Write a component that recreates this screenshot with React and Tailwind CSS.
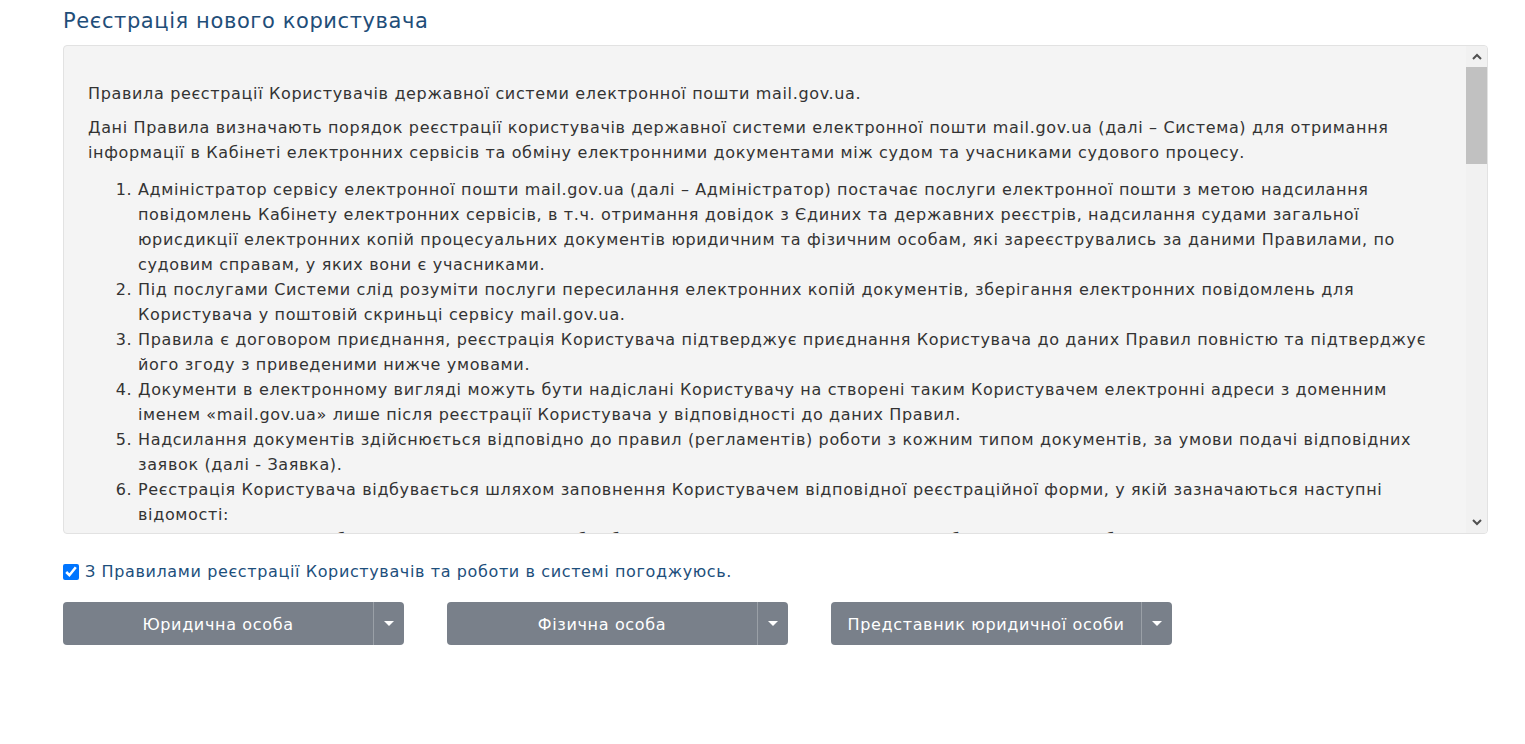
import React from "react";

function Caret() {
  return (
    <span className="block w-0 h-0 border-t-[5px] border-t-white border-x-[5px] border-x-transparent" />
  );
}

function SplitButton({ label }) {
  return (
    <div className="flex">
      <button className="w-[310px] h-[43px] pt-[2px] rounded-l-[4px] bg-[#79808a] text-white text-[16px] tracking-[0.65px] flex items-center justify-center">
        {label}
      </button>
      <button className="w-[31px] h-[43px] rounded-r-[4px] bg-[#79808a] border-l border-l-[#9aa0a7] flex items-center justify-center">
        <Caret />
      </button>
    </div>
  );
}

function Chevron({ up }) {
  return (
    <svg width="10" height="7" viewBox="0 0 10 7">
      <path
        d={up ? "M1 6 L5 2 L9 6" : "M1 1 L5 5 L9 1"}
        fill="none"
        stroke="#505050"
        strokeWidth="2"
      />
    </svg>
  );
}

export default function App() {
  return (
    <div className="min-h-[744px] bg-white font-['DejaVu_Sans',sans-serif] pl-[63px]">
      <h1 className="pt-[6px] text-[21px] leading-[30px] tracking-[0.6px] text-[#1f4e79] font-normal">
        Реєстрація нового користувача
      </h1>
      <div className="mt-[9px] w-[1425px] h-[489px] border border-[#e2e2e2] rounded-[4px] bg-[#f4f4f4] flex overflow-hidden">
        <div className="flex-1 overflow-hidden pl-[24px] pr-[24px] pt-[35px] text-[16px] leading-[25px] tracking-[0.65px] text-[#333]">
          <p className="mb-[9px]">
            Правила реєстрації Користувачів державної системи електронної пошти mail.gov.ua.
          </p>
          <p className="mb-[12px]">
            Дані Правила визначають порядок реєстрації користувачів державної системи електронної пошти mail.gov.ua (далі – Система) для отримання інформації в Кабінеті електронних сервісів та обміну електронними документами між судом та учасниками судового процесу.
          </p>
          <ol className="list-decimal pl-[50px]">
            <li>
              Адміністратор сервісу електронної пошти mail.gov.ua (далі – Адміністратор) постачає послуги електронної пошти з метою надсилання повідомлень Кабінету електронних сервісів, в т.ч. отримання довідок з Єдиних та державних реєстрів, надсилання судами загальної юрисдикції електронних копій процесуальних документів юридичним та фізичним особам, які зареєструвались за даними Правилами, по судовим справам, у яких вони є учасниками.
            </li>
            <li>
              Під послугами Системи слід розуміти послуги пересилання електронних копій документів, зберігання електронних повідомлень для Користувача у поштовій скриньці сервісу mail.gov.ua.
            </li>
            <li>
              Правила є договором приєднання, реєстрація Користувача підтверджує приєднання Користувача до даних Правил повністю та підтверджує його згоду з приведеними нижче умовами.
            </li>
            <li>
              Документи в електронному вигляді можуть бути надіслані Користувачу на створені таким Користувачем електронні адреси з доменним іменем «mail.gov.ua» лише після реєстрації Користувача у відповідності до даних Правил.
            </li>
            <li>
              Надсилання документів здійснюється відповідно до правил (регламентів) роботи з кожним типом документів, за умови подачі відповідних заявок (далі - Заявка).
            </li>
            <li>
              Реєстрація Користувача відбувається шляхом заповнення Користувачем відповідної реєстраційної форми, у якій зазначаються наступні відомості:
              <ul className="list-disc pl-[30px]">
                <li>прізвище, ім’я, по батькові (для фізичних осіб) або найменування (для юридичних осіб), код ЄДРПОУ або РНОКПП;</li>
                <li>адреса електронної пошти, номер телефону.</li>
              </ul>
            </li>
          </ol>
        </div>
        <div className="w-[21px] flex flex-col bg-[#f1f1f1]">
          <div className="h-[21px] flex items-center justify-center">
            <Chevron up />
          </div>
          <div className="flex-1">
            <div className="h-[97px] bg-[#c1c1c1]" />
          </div>
          <div className="h-[22px] flex items-center justify-center">
            <Chevron />
          </div>
        </div>
      </div>
      <label className="mt-[26px] flex items-center gap-[6px] text-[16px] leading-[24px] tracking-[0.62px] text-[#1d4f7c]">
        <input type="checkbox" defaultChecked className="w-4 h-4 accent-[#0075ff]" />
        З Правилами реєстрації Користувачів та роботи в системі погоджуюсь.
      </label>
      <div className="mt-[18px] flex gap-[43px]">
        <SplitButton label="Юридична особа" />
        <SplitButton label="Фізична особа" />
        <SplitButton label="Представник юридичної особи" />
      </div>
    </div>
  );
}
